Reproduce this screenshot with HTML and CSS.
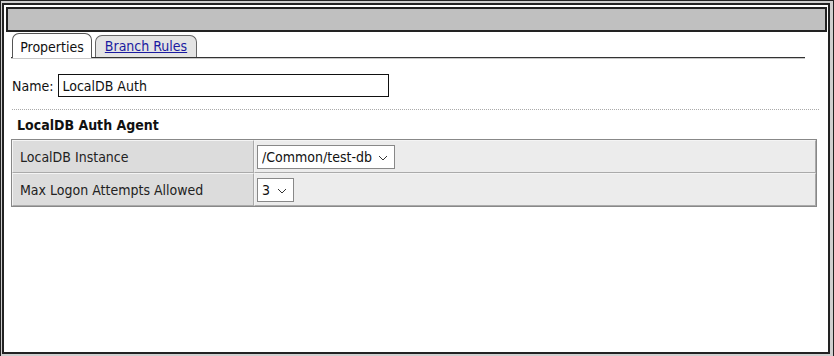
FILE: index.html
```html
<!DOCTYPE html>
<html lang="en">
<head>
  <meta charset="UTF-8">
  <title>LocalDB Auth</title>
  <link rel="stylesheet" href="styles.css">
</head>
<body>
  <div class="outer">
    <div class="window">
      <div class="titlebar"></div>

      <div class="content">
        <ul class="tabs">
          <li class="tab active">Properties</li>
          <li class="tab"><a href="#">Branch Rules</a></li>
        </ul>

        <div class="name-row">
          <label for="name">Name:</label>
          <input id="name" type="text" value="LocalDB Auth">
        </div>

        <hr class="dotted">

        <h2>LocalDB Auth Agent</h2>

        <table class="props">
          <tr>
            <td class="label">LocalDB Instance</td>
            <td class="value">
              <span class="select">
                <select><option>/Common/test-db</option></select>
                <svg width="10" height="6" viewBox="0 0 10 6"><path d="M1 1l4 4 4-4" fill="none" stroke="#333" stroke-width="1"/></svg>
              </span>
            </td>
          </tr>
          <tr>
            <td class="label">Max Logon Attempts Allowed</td>
            <td class="value">
              <span class="select">
                <select><option>3</option></select>
                <svg width="10" height="6" viewBox="0 0 10 6"><path d="M1 1l4 4 4-4" fill="none" stroke="#333" stroke-width="1"/></svg>
              </span>
            </td>
          </tr>
        </table>
      </div>
    </div>
  </div>
</body>
</html>
```

FILE: styles.css
```css
* {
  margin: 0;
  padding: 0;
  box-sizing: border-box;
}

body {
  background: #fff;
  font-family: "DejaVu Sans Condensed", "DejaVu Sans", sans-serif;
  font-stretch: semi-condensed;
  font-size: 13px;
  color: #111;
}

.outer {
  width: 834px;
  height: 356px;
  border: 1px solid #222;
  border-bottom: 0;
  padding: 2px 3px 2px 1px;
  background: #cfcfcf;
}

.window {
  height: 100%;
  border: 2px solid #222;
  background: #fff;
  padding: 2px 0 0 2px;
}

.titlebar {
  height: 25px;
  margin-right: 1px;
  border: 2px solid #222;
  background: #c0c0c0;
}

.content {
  padding: 1px 9px 0 5px;
}

.tabs {
  display: flex;
  align-items: flex-end;
  gap: 3px;
  list-style: none;
  margin-right: 14px;
  padding-left: 1px;
  height: 25px;
  border-bottom: 1px solid #333;
  box-shadow: 0 1px 0 #c8c8c8;
}

.tab {
  height: 22px;
  width: 102px;
  text-align: center;
  border: 1px solid #666;
  border-bottom: 0;
  border-radius: 7px 7px 0 0;
  background: #e4e4e4;
  font-size: 14px;
  line-height: 20px;
}

.tab.active {
  width: 80px;
  height: 25px;
  padding-top: 3px;
  margin-bottom: -1px;
  background: #fff;
  border-color: #555;
}

.tab a {
  color: #1a1aa0;
}

.name-row {
  display: flex;
  align-items: center;
  gap: 5px;
  margin-top: 16px;
  padding-left: 1px;
  font-size: 14px;
}

.name-row input {
  width: 331px;
  height: 23px;
  border: 1px solid #111;
  padding: 0 3px;
  font: inherit;
  color: #111;
}

.dotted {
  border: 0;
  border-top: 1px dotted #aaa;
  margin: 12px 0 0 1px;
}

h2 {
  font-size: 14px;
  font-weight: bold;
  margin: 7px 0 5px 6px;
  line-height: 17px;
}

.props {
  width: 806px;
  border-collapse: separate;
  border-spacing: 0;
  border: 1px solid #888;
}

.props td {
  height: 33px;
  border: 1px solid #aaa;
  border-top-color: #f4f4f4;
  border-left-color: #f4f4f4;
}

.props td.label {
  width: 242px;
  background: #dcdcdc;
  padding-left: 7px;
  font-size: 14px;
  color: #222;
}

.props td.value {
  background: #ececec;
  padding-left: 2px;
}

.select {
  position: relative;
  display: inline-block;
}

.select select {
  appearance: none;
  height: 24px;
  border: 1px solid #888;
  background: #fff;
  padding: 0 22px 0 4px;
  font: inherit;
  font-size: 14px;
  color: #111;
}

.select svg {
  position: absolute;
  right: 7px;
  top: 10px;
  pointer-events: none;
}
```
